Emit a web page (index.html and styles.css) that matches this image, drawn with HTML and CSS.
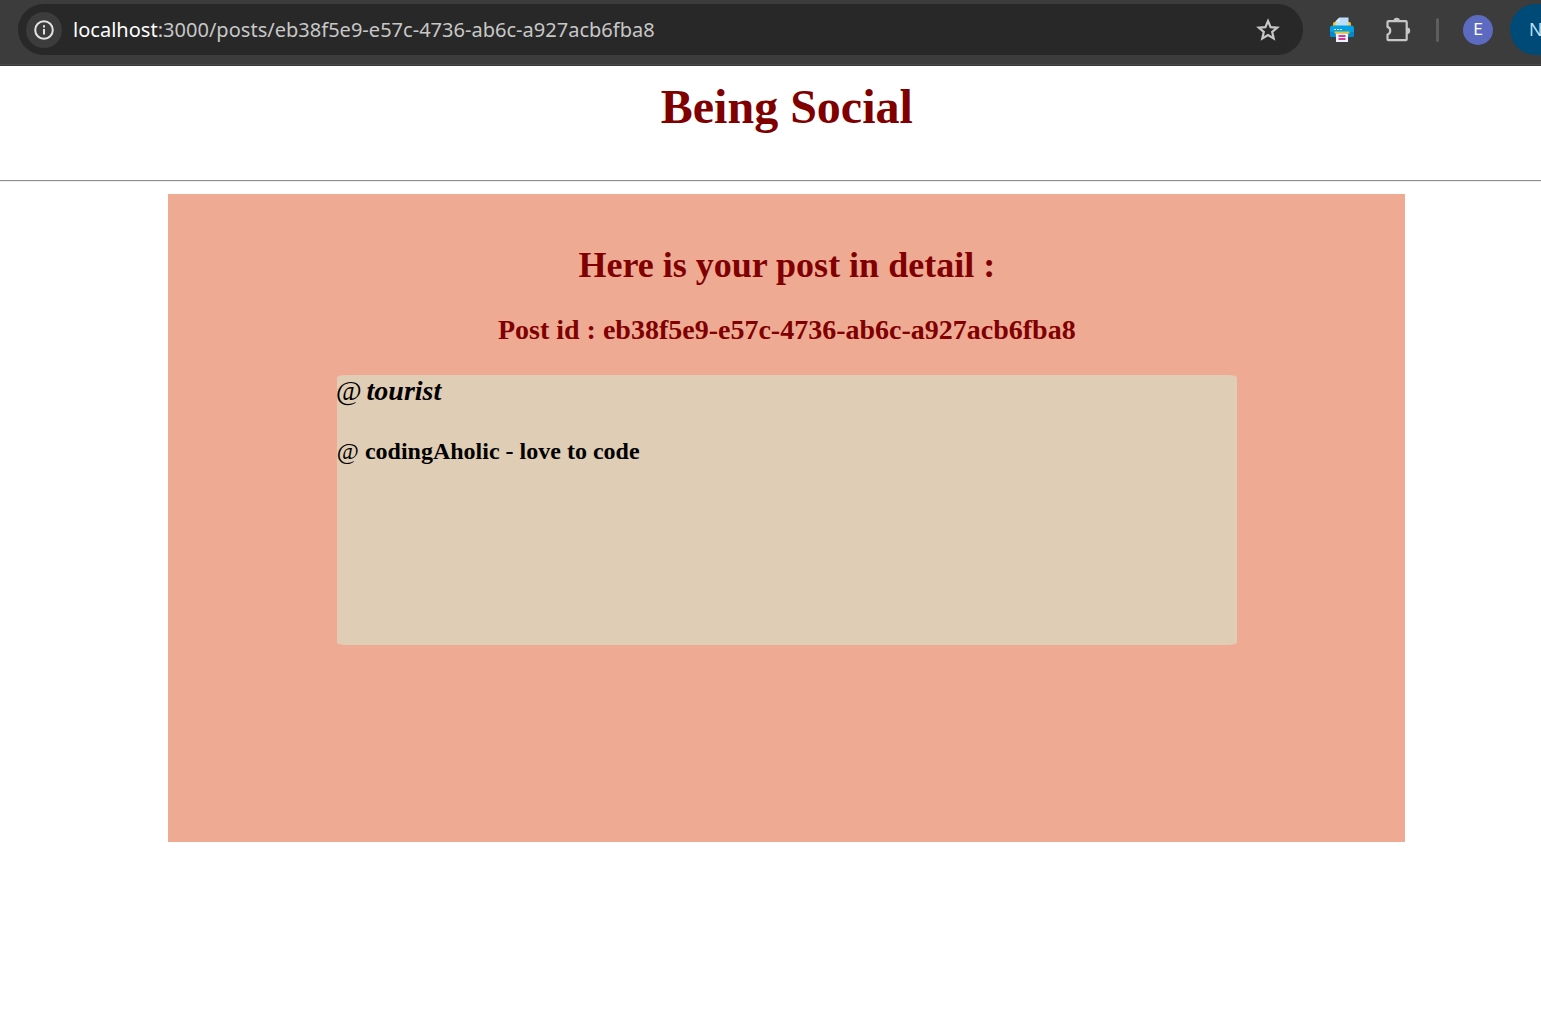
FILE: index.html
```html
<!DOCTYPE html>
<html lang="en">
<head>
<meta charset="utf-8">
<title>Being Social</title>
<link rel="stylesheet" href="styles.css">
</head>
<body>
<header class="toolbar">
  <div class="address">
    <span class="info"><svg width="20" height="20" viewBox="0 0 20 20" fill="none" stroke="#e3e3e3" stroke-width="2"><circle cx="10" cy="10" r="8.8"/><path d="M10 9v5.500M10 5.300v2.100"/></svg></span>
    <span class="url"><span class="host">localhost</span>:3000/posts/eb38f5e9-e57c-4736-ab6c-a927acb6fba8</span>
    <svg class="star" width="24" height="24" viewBox="0 0 24 24" fill="none" stroke="#c7c7c7" stroke-width="2.200"><path d="M12 3l2.600 6.100 6.600.55-5 4.300 1.500 6.450L12 17l-5.700 3.400 1.500-6.450-5-4.300 6.600-.55z"/></svg>
  </div>
  <svg class="printer" width="26" height="26" viewBox="0 0 26 26">
    <path fill="#ffc107" d="M4 6.500q0-1.500 1.500-1.500h15Q22 5 22 6.500V10H4z"/>
    <path fill="#bbdefb" d="M6.500 10V4.500l4-4H19.500V10z"/>
    <path fill="#e3f2fd" d="M6.500 4.500l4-4v4z"/>
    <path fill="#03a1e4" d="M1 11q0-2.500 2.500-2.500h19Q25 8.500 25 11v7q0 2-2 2H3q-2 0-2-2z"/>
    <path fill="#0288d1" d="M1 15h5v5H3q-2 0-2-2zM20 15h5v3q0 2-2 2h-3z"/>
    <path stroke="#c5eafa" stroke-dasharray="2 1" d="M5 12.500h8"/>
    <path fill="#ffc107" d="M5.500 14.500h15v2h-15z"/>
    <path fill="#eaf4fd" d="M7 16.500h12V25H7z"/>
    <path stroke="#d83a9c" stroke-width="2" d="M9.500 19h7M9.500 22h7"/>
  </svg>
  <svg class="puzzle" width="26" height="26" viewBox="0 0 26 26"><path fill="none" stroke="#c7c7c7" stroke-width="2.200" stroke-linejoin="round" d="M3.500 4.200h17.200q1 0 1 1v17q0 1-1 1H3.500q-1 0-1-1v-4.700a4 4 0 0 0 0-7.600V5.200q0-1 1-1z"/><path fill="#c7c7c7" d="M8.500 4a3.200 3.200 0 0 1 6.400 0zM22 10.500a3.200 3.200 0 0 1 0 6.400z"/></svg>
  <span class="divider"></span>
  <span class="avatar">E</span>
  <span class="chip">N</span>
</header>
<main class="page">
  <h1 class="title">Being Social</h1>
  <hr class="rule">
  <section class="detail">
    <h2 class="heading">Here is your post in detail :</h2>
    <h3 class="post-id">Post id : eb38f5e9-e57c-4736-ab6c-a927acb6fba8</h3>
    <article class="post">
      <h3 class="user"><span class="at">@</span> tourist</h3>
      <h4 class="content"><span class="at">@</span> codingAholic - love to code</h4>
    </article>
  </section>
</main>
</body>
</html>
```
FILE: styles.css
```css
* { box-sizing: border-box; }
html { overflow: hidden; }
body { margin: 0; height: 1023px; overflow: hidden; background: #fff; font-family: "Liberation Serif", "Times New Roman", serif; }
.toolbar { display: flex; align-items: center; width: 1573px; height: 66px; padding: 0 0 6px 18px; background: #3c3c3c; border-bottom: 1px solid #3a3a3a; box-shadow: inset 0 -1px #474747; font-family: "Open Sans", "Noto Sans", sans-serif; }
.address { display: flex; align-items: center; width: 1285px; height: 51px; padding: 0 23px 0 8px; border-radius: 26px; background: #282828; }
.info { display: flex; align-items: center; justify-content: center; width: 36px; height: 36px; border-radius: 50%; background: #3c3c3c; }
.url { margin-left: 11px; font-family: "Noto Sans", sans-serif; font-size: 20px; letter-spacing: 0.02px; line-height: 28px; white-space: nowrap; color: #c7c7c7; }
.host { color: #fff; }
.star { margin-left: auto; }
.printer { margin-left: 26px; }
.puzzle { margin-left: 30px; }
.divider { width: 3px; height: 24px; margin-left: 25px; border-radius: 2px; background: #5e5e5e; }
.avatar { display: flex; align-items: center; justify-content: center; width: 30px; height: 30px; margin-left: 24px; border-radius: 50%; background: #5c6bc0; color: #fff; font-family: Roboto, sans-serif; font-size: 16px; }
.chip { width: 63px; height: 51px; margin-left: 17px; padding-left: 19px; border-radius: 26px 0 0 26px; background: #004a77; color: #c2e7ff; font-size: 18px; line-height: 51px; }
.page { width: 1573.6px; text-align: center; color: #800000; }
.title { margin: 0; padding-top: 13px; font-size: 48px; line-height: 56px; }
.rule { height: 2px; margin: 45px 0 12px; border: 0; border-top: 1px solid #8f8f8f; border-bottom: 1px solid #ededed; }
.detail { width: 1237px; height: 648px; margin: 0 auto; padding-top: 50px; background: #efaa94; }
.heading { margin: 0; font-size: 36px; line-height: 42px; }
.post-id { margin: 27px 0 0; font-size: 28px; line-height: 33px; }
.post { width: 900px; height: 270px; margin: 29px auto 0; border-radius: 1%; background: #e0cdb5; text-align: left; color: #000; }
.user { margin: 0; font-size: 28px; font-style: italic; line-height: 32px; }
.content { margin: 31px 0 0; font-size: 24px; line-height: 27px; }
.at { font-weight: normal; }
.user .at { margin: 0 -2px 0 -1px; }
```
